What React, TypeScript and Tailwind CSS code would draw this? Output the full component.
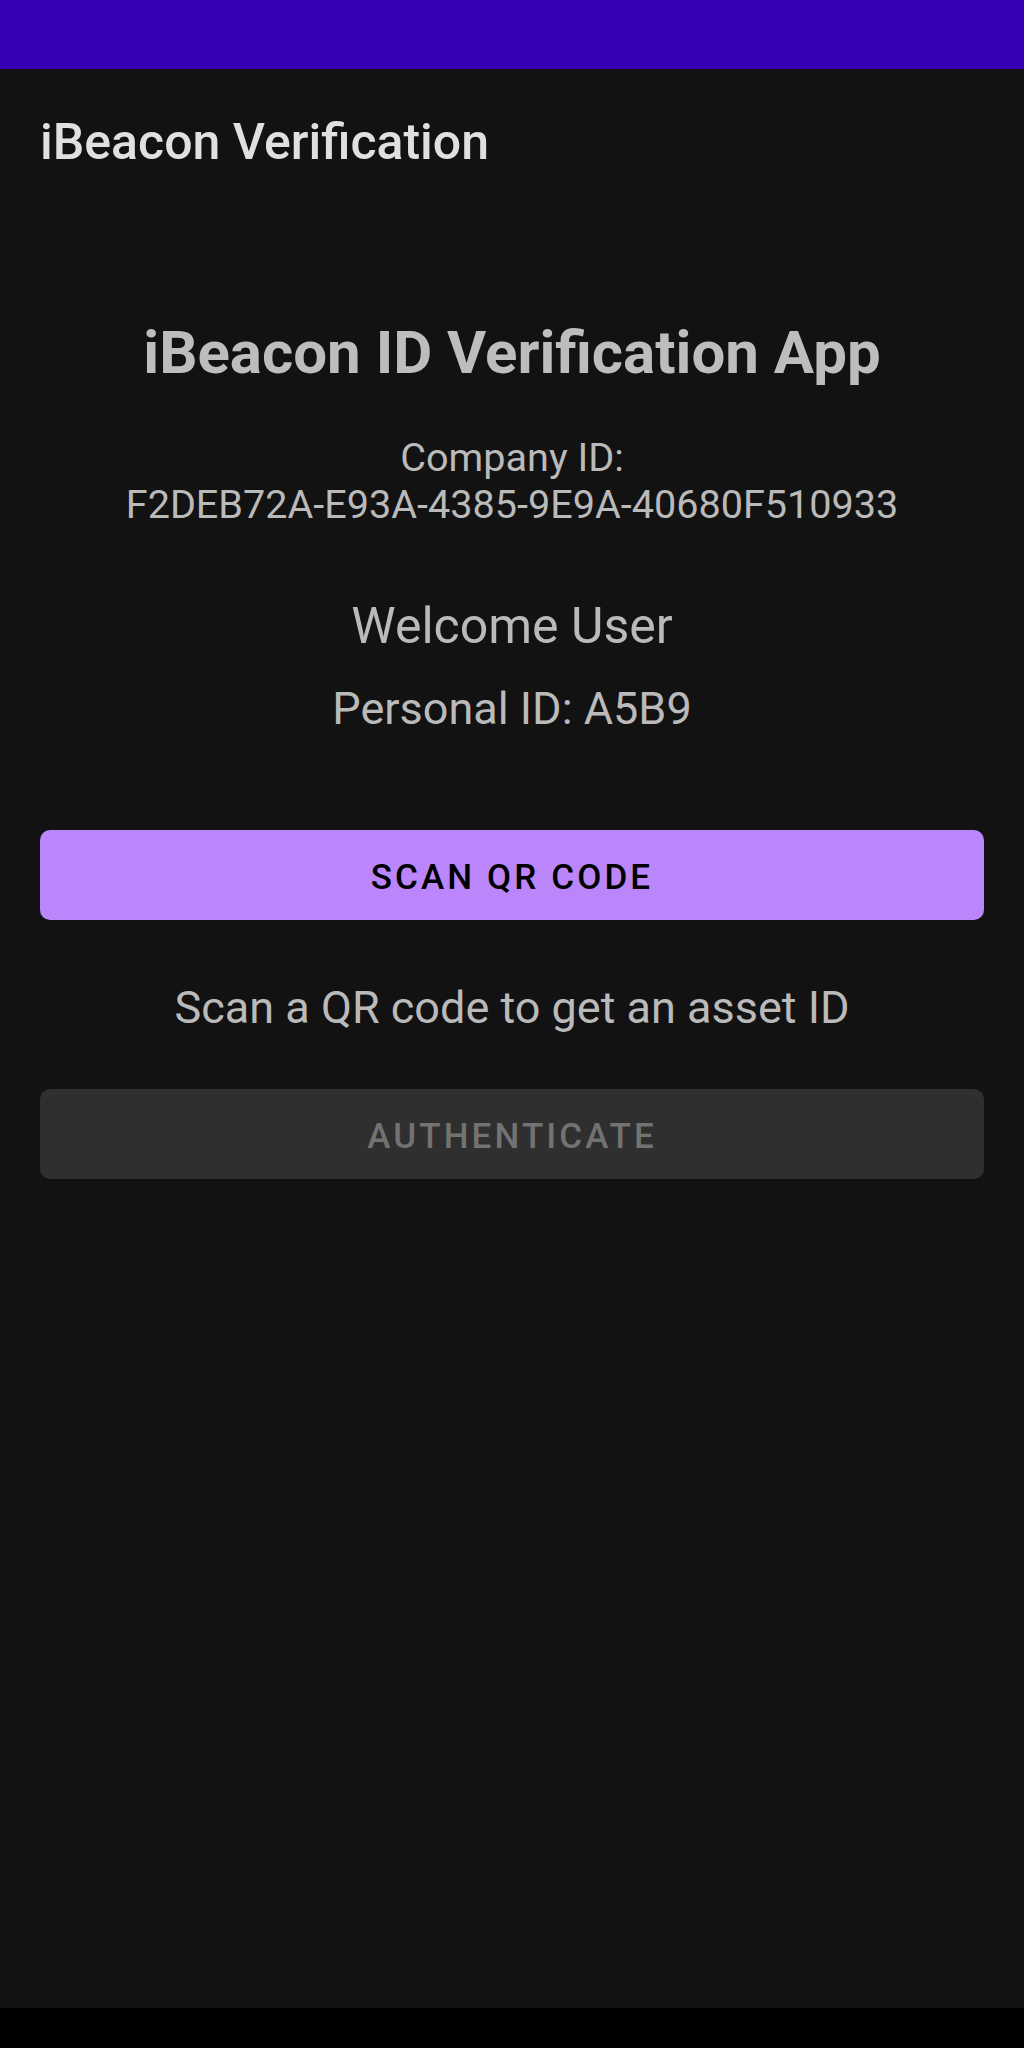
export default function App() {
  return (
    <div className="flex h-[2048px] w-[1024px] flex-col bg-[#121212] font-['Roboto','Liberation_Sans',sans-serif]">
      {/* status bar */}
      <div className="h-[69px] shrink-0 bg-[#3700b3]" />

      {/* toolbar */}
      <div className="flex h-[139px] shrink-0 items-center pl-[40px] pt-[8px]">
        <span className="text-[50px] font-medium leading-[59px] text-[#e0e0e0]">iBeacon Verification</span>
      </div>

      <main className="flex flex-1 flex-col items-center px-[40px]">
        <h1 className="mt-[110px] text-[60px] font-bold leading-[70px] text-[#bdbdbd]">iBeacon ID Verification App</h1>

        <div className="mt-[46px] text-center text-[39.6px] leading-[47px] text-[#bababa]">
          <div>Company ID:</div>
          <div>F2DEB72A-E93A-4385-9E9A-40680F510933</div>
        </div>

        <div className="mt-[69px] text-[50px] leading-[59px] text-[#bababa]">Welcome User</div>
        <div className="mt-[26px] text-[45px] leading-[53px] text-[#bababa]">Personal ID: A5B9</div>

        <button className="mt-[95px] flex h-[90px] w-full items-center justify-center rounded-[10px] bg-[#bb86fc] pt-[6px] text-[35px] font-medium tracking-[3.1px] text-black">
          SCAN QR CODE
        </button>

        <div className="mt-[61px] text-[45px] leading-[53px] text-[#bababa]">Scan a QR code to get an asset ID</div>

        <button
          disabled
          className="mt-[55px] flex h-[90px] w-full items-center justify-center rounded-[10px] bg-[#2f2f2f] pt-[6px] text-[35px] font-medium tracking-[3.1px] text-[#727272]"
        >
          AUTHENTICATE
        </button>
      </main>

      {/* navigation bar */}
      <div className="h-[40px] shrink-0 bg-black" />
    </div>
  );
}
